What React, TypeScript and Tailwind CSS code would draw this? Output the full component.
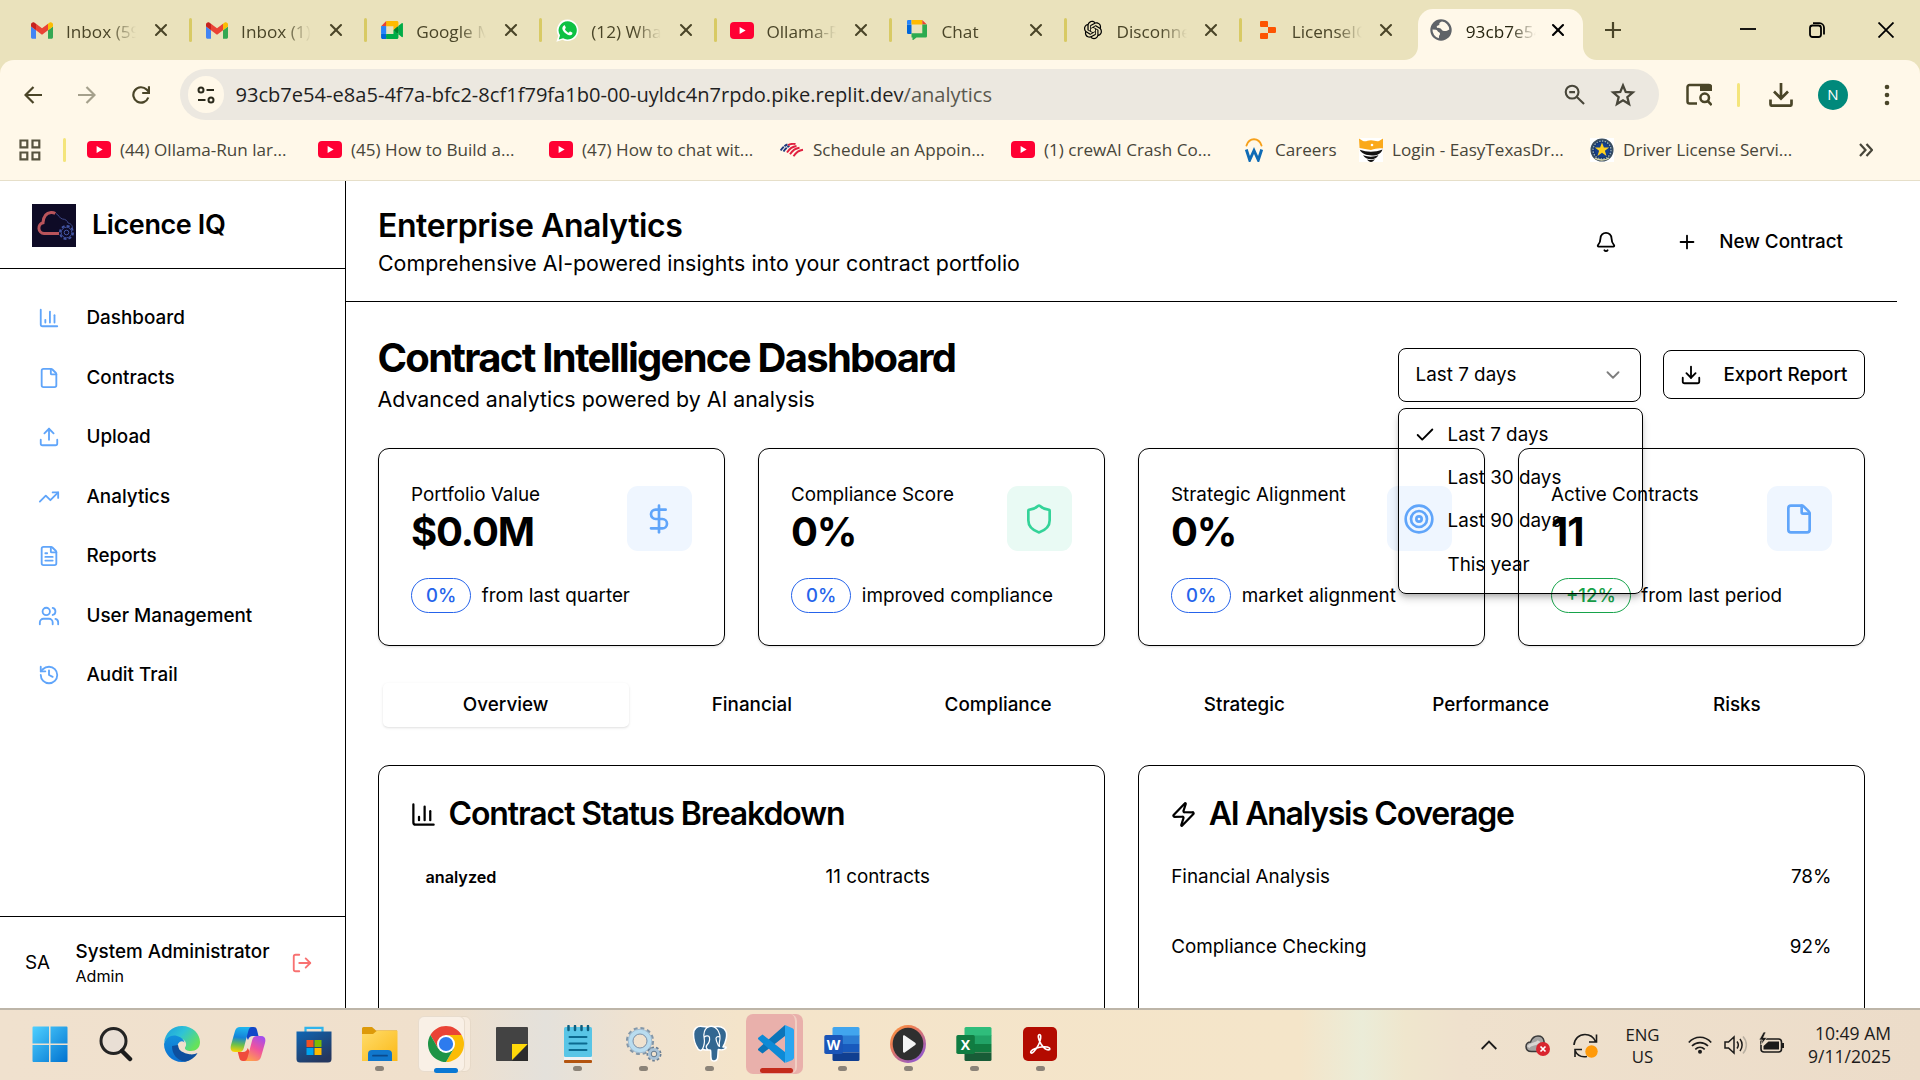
import React from "react";
import {
  X, Plus, Bell, Download, Upload, File, FileText,
  TrendingUp, Users, History, LogOut, DollarSign, Shield, Target, Zap, ChevronDown, Check,
} from "lucide-react";
import { RiOpenaiFill } from "react-icons/ri";

/* ---------- shared drawings ---------- */

function BarChart({ className }: { className?: string }) {
  return (
    <svg viewBox="0 0 24 24" className={className} fill="none" stroke="currentColor" strokeWidth="2" strokeLinecap="round" strokeLinejoin="round">
      <path d="M3 3v16a2 2 0 0 0 2 2h16" />
      <path d="M18 17V9" />
      <path d="M13 17V5" />
      <path d="M8 17v-3" />
    </svg>
  );
}

function Gmail() {
  return (
    <svg viewBox="52 42 88 66" className="h-[17px] w-[22px]">
      <path fill="#4285f4" d="M58 108h14V74L52 59v43c0 3.32 2.69 6 6 6" />
      <path fill="#34a853" d="M120 108h14c3.32 0 6-2.69 6-6V59l-20 15" />
      <path fill="#fbbc04" d="M120 48v26l20-15v-8c0-7.42-8.47-11.65-14.4-7.2" />
      <path fill="#ea4335" d="M72 74V48l24 18 24-18v26L96 92" />
      <path fill="#c5221f" d="M52 51v8l20 15V48l-5.6-4.2c-5.94-4.45-14.4-.22-14.4 7.2" />
    </svg>
  );
}

function Meet() {
  return (
    <svg viewBox="0 0 87.5 72" className="h-[18px] w-[22px]">
      <path fill="#00832d" d="M49.5 36l8.53 9.75 11.47 7.33 2-17.02-2-16.64-11.69 6.44z" />
      <path fill="#0066da" d="M0 51.5V66c0 3.315 2.685 6 6 6h14.5l3-10.96-3-9.54-9.95-3z" />
      <path fill="#e94235" d="M20.5 0L0 20.5l10.55 3 9.95-3 2.95-9.41z" />
      <path fill="#2684fc" d="M20.5 20.5H0v31h20.5z" />
      <path fill="#00ac47" d="M82.6 8.68L69.5 19.42v33.66l13.16 10.79c1.97 1.54 4.85.135 4.85-2.37V11c0-2.535-2.945-3.925-4.91-2.32zM49.5 36v15.5h-29V72h43c3.315 0 6-2.685 6-6V53.08z" />
      <path fill="#ffba00" d="M63.5 0h-43v20.5h29V36l20-16.57V6c0-3.315-2.685-6-6-6z" />
    </svg>
  );
}

function WhatsApp() {
  return (
    <svg viewBox="0 0 24 24" className="h-[23px] w-[23px]">
      <path d="M12.2.6A11.2 11.2 0 0 0 2.4 17.4L.4 23.7l6.5-2A11.2 11.2 0 1 0 12.2.6Z" fill="#fff" />
      <path d="M12.2 2.3a9.5 9.5 0 0 0-8 14.6l-1.3 4.4 4.5-1.3A9.5 9.5 0 1 0 12.2 2.3Z" fill="#0dc143" />
      <path d="M8.3 6.7c.4-.2.9-.2 1.1.3l.8 1.8c.1.4 0 .7-.9 1.8.9 1.7 2.200 2.9 4 3.700.9-.9 1.100-1.400 1.600-1.200l2 1c.4.300.3 1-.1 1.700-.6.900-2 1.400-3.200 1.100-3.500-.8-6.700-4.200-7-6.900-.1-1.400.8-2.900 1.700-3.300Z" fill="#fff" />
    </svg>
  );
}

function YouTube() {
  return (
    <svg viewBox="0 0 24 17" className="h-[17px] w-[24px]">
      <rect width="24" height="17" rx="4" fill="#ff0033" />
      <path d="M9.600 5v7l6-3.500z" fill="#fff" />
    </svg>
  );
}

function GoogleChat() {
  return (
    <svg viewBox="0 0 20 20" className="h-[20px] w-[20px]">
      <path d="M0 4.500h4.500V14H1.300A1.300 1.300 0 0 1 0 12.700z" fill="#0066da" />
      <path d="M1.300 0H4.500v4.500H0V1.300A1.300 1.300 0 0 1 1.300 0Z" fill="#2684fc" />
      <path d="M4.500 0h10.800v4.500H4.500z" fill="#ffba00" />
      <path d="M15.300 0l4.500 4.500h-4.500z" fill="#ea4335" />
      <path d="M15.300 4.500H20v11.800a1.300 1.300 0 0 1-1.300 1.300H9.500L5.500 20.600v-3H4.500v-4.300h10.800z" fill="#2cab4f" />
    </svg>
  );
}

function Replit() {
  return (
    <svg viewBox="0 0 16 18" className="h-[18px] w-[16px]">
      <path d="M0 1a1 1 0 0 1 1-1h6a1 1 0 0 1 1 1v5H1a1 1 0 0 1-1-1zM8 6h6.500A1.300 1.300 0 0 1 16 7.300v3.400A1.300 1.300 0 0 1 14.500 12H8zM0 13a1 1 0 0 1 1-1h7v5a1 1 0 0 1-1 1H1a1 1 0 0 1-1-1z" fill="#fd5402" />
    </svg>
  );
}

function Globe() {
  return (
    <svg viewBox="0 0 22 22" className="h-[22px] w-[22px]">
      <circle cx="11" cy="11" r="10.700" fill="#5f6368" />
      <path d="M12 2.500c-2 .5-3 1.500-2.700 3 .4 1.200-2.800.8-2.600 2.600.2 1.400 2 .8 3.300 1.200 1.600.5 1.500 2 3 2.400 1.400.4 3 .3 4.500-.3l1.800-1a8.500 8.500 0 0 0-7.300-7.900ZM2.500 10.500a8.500 8.500 0 0 0 6.300 8.700c.5-1.200-.3-2 .8-3.200.8-.9.5-2.200-.6-2.700-1.600-.7-1.300-2.200-3-2.600z" fill="#fff8e9" />
    </svg>
  );
}

function BankFlag() {
  return (
    <svg viewBox="0 0 24 14" className="h-[14px] w-[24px]" fill="none" strokeWidth="1.900">
      <path d="M.6 7.500C2.500 4.500 4.500 2.600 7.500 1.500M3.500 8.500c1.700-2.700 3.500-4.400 6-5.500" stroke="#1f3a7d" strokeDasharray="5 .8" />
      <path d="M8 2.200c3-1.600 5-1.800 7.500-1.200M7 9.500c2.300-3.500 5.500-6 9.500-6.500M10 11.300c2.500-3.800 5.500-6 9.500-6.500M13.500 13.200c2.500-3.800 5.500-6 9.500-6.500" stroke="#e0203f" />
    </svg>
  );
}

function Workday() {
  return (
    <svg viewBox="0 0 20 24" className="h-[24px] w-[20px]" fill="none">
      <path d="M2.500 7.500C4 3 6.500 1.300 10 1.300s6 1.700 7.500 6.200" stroke="#f6a01a" strokeWidth="1.900" strokeLinecap="round" />
      <path d="M2.300 11.500l3.400 10.500L10 12.500l4.300 9.500 3.400-10.500" stroke="#0f6bb5" strokeWidth="2.900" />
    </svg>
  );
}

function TexasShield() {
  return (
    <svg viewBox="0 0 24 24" className="h-[24px] w-[24px]">
      <rect width="24" height="24" fill="#fff" />
      <path d="M0 .5l4 2.500c3 1 4.500-.8 8-.8s5 1.500 8 .8L24 .5v10c-4-.8-7.500.2-12 1.500C8 11.500 4 10.500.5 10z" fill="#fba919" />
      <circle cx="13" cy="7" r="1.300" fill="#fff" />
      <path d="M.8 11.800c7 2.500 15 2.800 22.700-.3-1.500 4-5 6-10.500 6S2.500 15.800.8 11.800Z" fill="#111" />
      <path d="M4 17.300c5.500 2 10.500 1.900 15.500-.2-1.600 3-4 4.100-7.500 4.100s-6.300-1.300-8-3.900ZM8 21.400c3 .7 5 .7 8-.1-1.200 1.700-2.500 2.500-4 2.700-1.500-.2-3-1.200-4-2.600Z" fill="#111" />
    </svg>
  );
}

function DpsBadge() {
  return (
    <svg viewBox="0 0 24 24" className="h-[24px] w-[24px]">
      <rect width="24" height="24" fill="#fff" />
      <circle cx="12" cy="12" r="10.800" fill="#17386f" stroke="#3c4f5f" strokeWidth="1.500" />
      <circle cx="12" cy="12" r="9" fill="none" stroke="#9fb3b3" strokeWidth="1.300" strokeDasharray="1.500 1.300" />
      <circle cx="12" cy="12" r="7.300" fill="#15408f" />
      <path d="M12 4.500l1.900 5h5.200l-4.200 3.200 1.600 5.200-4.500-3.100-4.500 3.100 1.600-5.200-4.200-3.200h5.200z" fill="#ffd11f" />
      <path d="M5 20c3 2.500 10 2.800 14 0" stroke="#d9d6a8" strokeWidth="1.500" fill="none" />
    </svg>
  );
}

/* ---------- browser chrome ---------- */

const tabs = [
  { icon: <Gmail />, title: "Inbox (59)" },
  { icon: <Gmail />, title: "Inbox (1)" },
  { icon: <Meet />, title: "Google Meet" },
  { icon: <WhatsApp />, title: "(12) WhatsApp" },
  { icon: <YouTube />, title: "Ollama-Run" },
  { icon: <GoogleChat />, title: "Chat" },
  { icon: <RiOpenaiFill className="h-[22px] w-[22px] text-black" />, title: "Disconnect" },
  { icon: <Replit />, title: "LicenseIQ" },
];

function TabTitle({ children }: { children: React.ReactNode }) {
  return (
    <span className="w-[70px] shrink-0 overflow-hidden whitespace-nowrap text-[17.200px] leading-6 [mask-image:linear-gradient(to_right,black_62%,transparent_100%)]">
      {children}
    </span>
  );
}

function TabStrip() {
  return (
    <div className="flex h-[60px] shrink-0 bg-[#eae2bc] pl-[15px] text-[#4a4528]">
      {tabs.map((t, i) => (
        <div key={i} className="flex h-[60px] w-[175.100px] shrink-0 items-center pl-[15px]">
          <span className="flex w-[24px] shrink-0 items-center justify-center">{t.icon}</span>
          <span className="ml-[12px] mt-[3px] flex">
            <TabTitle>{t.title}</TabTitle>
          </span>
          <X className="ml-[14.500px] h-[20px] w-[20px] shrink-0" strokeWidth={2.500} />
          {i < 7 && <span className="-mr-[1.500px] ml-auto h-[24px] w-[3px] rounded-full bg-[#d8ca64]" />}
        </div>
      ))}
      <div className="relative ml-[2px] mt-[9px] flex h-[51px] w-[165px] shrink-0 items-center rounded-t-[15px] bg-[#fff8e9] pb-[9px] pl-[12px] text-[#26240f]">
        <svg viewBox="0 0 14 14" className="absolute -left-[14px] bottom-0 h-[14px] w-[14px]">
          <path d="M14 0v14H0C8 14 14 8 14 0Z" fill="#fff8e9" />
        </svg>
        <svg viewBox="0 0 14 14" className="absolute -right-[14px] bottom-0 h-[14px] w-[14px]">
          <path d="M0 0v14h14C6 14 0 8 0 0Z" fill="#fff8e9" />
        </svg>
        <Globe />
        <span className="ml-[14px] mt-[3px] flex">
          <TabTitle>93cb7e54</TabTitle>
        </span>
        <X className="ml-[12px] h-[20px] w-[20px] shrink-0 text-black" strokeWidth={2.500} />
      </div>
      <div className="flex h-[60px] flex-1 items-center">
        <svg viewBox="0 0 16 16" className="ml-[22px] h-[16px] w-[16px]" stroke="#4a4528" strokeWidth="2.200">
          <path d="M8 0v16M0 8h16" />
        </svg>
        <svg viewBox="0 0 16 16" className="ml-[119px] h-[16px] w-[16px]" stroke="#000" strokeWidth="1.800">
          <path d="M0 7h16" />
        </svg>
        <svg viewBox="0 0 16 16" className="ml-[53px] h-[16px] w-[16px]" fill="none" stroke="#000" strokeWidth="1.800">
          <rect x="1" y="3.500" width="11" height="11.500" rx="2.500" />
          <path d="M4 1.200h6.500A4.500 4.500 0 0 1 15 5.700v6.800" />
        </svg>
        <svg viewBox="0 0 16 16" className="ml-[53px] h-[16px] w-[16px]" stroke="#000" strokeWidth="1.800">
          <path d="M.5.5l15 15M15.500.5l-15 15" />
        </svg>
      </div>
    </div>
  );
}

function Toolbar() {
  return (
    <div className="flex h-[72px] shrink-0 items-center bg-[#eae2bc]">
      <div className="flex h-[72px] w-full items-center rounded-t-[14px] bg-[#fff8e9] pb-[3px] text-[#4a4528]">
        <svg viewBox="0 0 18 18" className="ml-[24px] h-[18px] w-[18px]" fill="none" stroke="currentColor" strokeWidth="2.200">
          <path d="M18 9H1.500M9.500 1L1.500 9l8 8" />
        </svg>
        <svg viewBox="0 0 18 18" className="ml-[36px] h-[18px] w-[18px] text-[#a5a08c]" fill="none" stroke="currentColor" strokeWidth="2.200">
          <path d="M0 9h16.500M8.500 1l8 8-8 8" />
        </svg>
        <svg viewBox="0 0 18 18" className="ml-[36px] h-[18px] w-[18px]" fill="none" stroke="currentColor" strokeWidth="2.200">
          <path d="M16.300 11.500A7.700 7.700 0 1 1 14.600 3.600L17 6" />
          <path d="M17 .2V7h-6.800" />
        </svg>
        <div className="ml-[30px] flex h-[51px] w-[1479px] shrink-0 items-center rounded-full bg-[#ece8e0] pl-[8px]">
          <span className="flex h-[37px] w-[36px] items-center justify-center rounded-full bg-[#fff8e9]">
            <svg viewBox="0 0 18 18" className="h-[18px] w-[18px]" fill="none" stroke="#2b2a1c" strokeWidth="2">
              <circle cx="4" cy="4" r="2.500" />
              <path d="M9.500 4H17" />
              <circle cx="14" cy="14" r="2.500" />
              <path d="M1 14h7.500" />
            </svg>
          </span>
          <span className="ml-[11.500px] whitespace-nowrap text-[20.090px] leading-[26px] text-[#1f1f1f]">
            93cb7e54-e8a5-4f7a-bfc2-8cf1f79fa1b0-00-uyldc4n7rpdo.pike.replit.dev<span className="text-[#5a584e]">/analytics</span>
          </span>
          <svg viewBox="0 0 22 22" className="ml-auto h-[21px] w-[21px] text-[#48463a]" fill="none" stroke="currentColor" strokeWidth="2.200">
            <circle cx="8.500" cy="8.500" r="6.700" />
            <path d="M13.500 13.500L21 21M5.500 8.500h6" />
          </svg>
          <svg viewBox="0 0 24 24" className="ml-[25px] mr-[23px] h-[26px] w-[26px] text-[#48463a]" fill="none" stroke="currentColor" strokeWidth="2.100">
            <path d="M12 3.200l2.500 6 6.500.5-5 4.200 1.600 6.400L12 16.900l-5.600 3.400L8 13.900 3 9.700l6.500-.5z" />
          </svg>
        </div>
        <svg viewBox="0 0 26 23" className="ml-[27px] h-[23px] w-[26px]" fill="none" stroke="currentColor" strokeWidth="2.500">
          <path d="M11 20.500H3.500a2 2 0 0 1-2-2V4a2 2 0 0 1 2-2H23a2 2 0 0 1 2 2v4" />
          <path d="M14 2h11v6H14z" fill="currentColor" stroke="none" />
          <circle cx="18.700" cy="14.800" r="4.300" />
          <path d="M21.700 18l4 4" />
        </svg>
        <span className="ml-[25px] h-[24px] w-[3px] rounded-full bg-[#f4e57c]" />
        <svg viewBox="0 0 24 24" className="ml-[28.500px] h-[24px] w-[24px]" fill="none" stroke="currentColor" strokeWidth="2.700">
          <path d="M12 0v14.500M5 8.500l7 7 7-7M1.500 16.500v4.700a1.500 1.500 0 0 0 1.500 1.500h18a1.500 1.500 0 0 0 1.500-1.500v-4.700" />
        </svg>
        <span className="ml-[25.500px] flex h-[30px] w-[30px] items-center justify-center rounded-full bg-[#00897b] text-[15px] text-white">N</span>
        <svg viewBox="0 0 6 22" className="ml-[36px] h-[22px] w-[6px]" fill="currentColor">
          <circle cx="3" cy="3" r="2.300" />
          <circle cx="3" cy="11" r="2.300" />
          <circle cx="3" cy="19" r="2.300" />
        </svg>
      </div>
    </div>
  );
}

const bookmarks = [
  { icon: <YouTube />, label: "(44) Ollama-Run lar..." },
  { icon: <YouTube />, label: "(45) How to Build a..." },
  { icon: <YouTube />, label: "(47) How to chat wit..." },
  { icon: <BankFlag />, label: "Schedule an Appoin..." },
  { icon: <YouTube />, label: "(1) crewAI Crash Co..." },
  { icon: <Workday />, label: "Careers", narrow: true },
  { icon: <TexasShield />, label: "Login - EasyTexasDr..." },
  { icon: <DpsBadge />, label: "Driver License Servi..." },
];

function BookmarksBar() {
  return (
    <div className="flex h-[49px] shrink-0 items-center border-b border-[#e6dfc9] bg-[#fff8e9] pb-[13px] text-[#48463a]">
      <svg viewBox="0 0 22 22" className="ml-[19px] h-[22px] w-[22px]" fill="none" stroke="#57533f" strokeWidth="2.200">
        <path d="M1.500 1.500h6.800v6.800H1.500zM13.500 1.500h6.800v6.800h-6.800zM1.500 13.500h6.800v6.800H1.500zM13.500 13.500h6.800v6.800h-6.800z" />
      </svg>
      <span className="ml-[22px] h-[24px] w-[3px] rounded-full bg-[#f4e57c]" />
      <div className="ml-[21px] flex">
        {bookmarks.map((b) => (
          <div key={b.label} className={b.narrow ? "flex w-[117px] items-center" : "flex w-[231px] items-center"}>
            <span className="flex w-[24px] shrink-0 items-center justify-center">{b.icon}</span>
            <span className="ml-[9px] whitespace-nowrap text-[17.100px] leading-6">{b.label}</span>
          </div>
        ))}
      </div>
      <svg viewBox="0 0 14 14" className="ml-[38px] h-[14px] w-[14px]" fill="none" stroke="#48463a" strokeWidth="2.200">
        <path d="M1 1l5.500 6L1 13M7.500 1L13 7l-5.500 6" />
      </svg>
    </div>
  );
}

/* ---------- application ---------- */

const nav = [
  { icon: <BarChart className="h-[22px] w-[22px]" />, label: "Dashboard" },
  { icon: <File className="h-[22px] w-[22px]" />, label: "Contracts" },
  { icon: <Upload className="h-[22px] w-[22px]" />, label: "Upload" },
  { icon: <TrendingUp className="h-[22px] w-[22px]" />, label: "Analytics" },
  { icon: <FileText className="h-[22px] w-[22px]" />, label: "Reports" },
  { icon: <Users className="h-[22px] w-[22px]" />, label: "User Management" },
  { icon: <History className="h-[22px] w-[22px]" />, label: "Audit Trail" },
];

function Logo() {
  return (
    <svg viewBox="0 0 44 43" className="h-[43px] w-[44px]" fill="none">
      <rect width="44" height="43" fill="#0e0b26" />
      <path d="M27 29.500H12a5.500 5.500 0 0 1-1-10.800C11.500 12 15 8.800 19 8.500c1.500-.1 3 .2 4.300 1" stroke="#b9545b" strokeWidth="3" />
      <path d="M24 9.500c3 1.500 3.500 5 6.500 5.500 3 0 5 2 5.500 4 3.500.5 5 3.500 4.500 6.500" stroke="#3f4a8c" strokeWidth="1" />
      <circle cx="34.500" cy="28.500" r="6.600" stroke="#4457a6" strokeWidth="1.800" strokeDasharray="3 2.180" />
      <circle cx="34.500" cy="28.500" r="5.300" stroke="#4457a6" strokeWidth=".9" />
      <circle cx="34.500" cy="28.500" r="2.300" stroke="#4457a6" strokeWidth="1" />
    </svg>
  );
}

function Sidebar() {
  return (
    <aside className="flex w-[346px] shrink-0 flex-col border-r border-black">
      <div className="flex h-[88px] shrink-0 items-center border-b border-black pl-[32px] pt-[2px]">
        <Logo />
        <span className="-mt-[1px] ml-[16px] text-[27px] font-semibold leading-9 tracking-[-0.400px]">Licence IQ</span>
      </div>
      <nav className="flex flex-1 flex-col pt-[19.500px]">
        {nav.map((n) => (
          <div key={n.label} className="flex h-[59.500px] items-center pl-[37.500px]">
            <span className="text-[#60a5fa]">{n.icon}</span>
            <span className="ml-[27px] text-[18.850px] font-medium leading-7">{n.label}</span>
          </div>
        ))}
      </nav>
      <div className="flex h-[92px] shrink-0 items-center border-t border-black pl-[25px] pt-[1px]">
        <span className="w-[50.500px] text-[18.850px] leading-7">SA</span>
        <div className="w-[215.500px]">
          <div className="text-[18.850px] font-medium leading-[26px]">System Administrator</div>
          <div className="text-[16.100px] leading-[22px]">Admin</div>
        </div>
        <LogOut className="h-[22px] w-[22px] text-[#f87171]" />
      </div>
    </aside>
  );
}

function Header() {
  return (
    <header className="flex h-[121px] shrink-0 items-center justify-between border-b border-black pl-[32px] pr-[32px]">
      <div className="pt-[1px]">
        <h1 className="text-[32px] font-semibold leading-[43px] tracking-[-0.430px]">Enterprise Analytics</h1>
        <p className="text-[21.380px] leading-[32px]">Comprehensive AI-powered insights into your contract portfolio</p>
      </div>
      <div className="flex items-center pt-[2px]">
        <Bell className="h-[22px] w-[22px]" />
        <Plus className="ml-[59px] h-[22px] w-[22px]" />
        <span className="ml-[21.500px] mr-[22px] text-[18.850px] font-medium leading-7">New Contract</span>
      </div>
    </header>
  );
}

const periods = ["Last 7 days", "Last 30 days", "Last 90 days", "This year"];

function PeriodSelect() {
  return (
    <div className="relative">
      <div className="flex h-[54px] w-[243px] items-center justify-between rounded-[8px] border border-black pl-[16.500px] pr-[16px]">
        <span className="text-[18.850px] leading-7">Last 7 days</span>
        <ChevronDown className="h-[22px] w-[22px] opacity-50" />
      </div>
      <div className="absolute left-0 top-[59.500px] z-10 flex h-[186px] w-[245px] flex-col rounded-[8px] border border-black pt-[4.500px] shadow-[0_5px_8px_-1px_rgba(0,0,0,0.22),0_3px_5px_-2px_rgba(0,0,0,0.2)]">
        {periods.map((p, i) => (
          <div key={p} className="flex h-[43.300px] items-center pl-[15px]">
            <span className="w-[33.500px]">{i === 0 && <Check className="h-[22px] w-[22px]" />}</span>
            <span className="text-[18.850px] leading-7">{p}</span>
          </div>
        ))}
      </div>
    </div>
  );
}

const stats = [
  { label: "Portfolio Value", value: "$0.0M", badge: "0%", note: "from last quarter", tone: "blue", icon: <DollarSign className="h-[32px] w-[32px]" /> },
  { label: "Compliance Score", value: "0%", badge: "0%", note: "improved compliance", tone: "green", icon: <Shield className="h-[32px] w-[32px]" /> },
  { label: "Strategic Alignment", value: "0%", badge: "0%", note: "market alignment", tone: "blue", icon: <Target className="h-[32px] w-[32px]" /> },
  { label: "Active Contracts", value: "11", badge: "+12%", note: "from last period", tone: "blue", icon: <File className="h-[32px] w-[32px]" /> },
];

function StatCards() {
  return (
    <div className="mt-[33px] grid shrink-0 grid-cols-4 gap-[32.500px]">
      {stats.map((s) => (
        <div key={s.label} className="h-[198px] rounded-[11px] border border-black px-[32.500px] pt-[32px] shadow-sm">
          <div className="flex h-[75px] items-center justify-between">
            <div>
              <div className="text-[18.850px] leading-[27px]">{s.label}</div>
              <div className="text-[40px] font-bold leading-[48px] tracking-[-1.100px]">{s.value}</div>
            </div>
            <span
              className={
                s.tone === "green"
                  ? "flex h-[65px] w-[65px] items-center justify-center rounded-[11px] bg-[#e9faf4] text-[#34d399]"
                  : "flex h-[65px] w-[65px] items-center justify-center rounded-[11px] bg-[#eff6ff] text-[#60a5fa]"
              }
            >
              {s.icon}
            </span>
          </div>
          <div className="mt-[22px] flex items-center">
            <span
              className={
                s.badge === "+12%"
                  ? "flex h-[35px] items-center rounded-full border border-[#16a34a] px-[14px] text-[18.500px] font-medium text-[#16a34a]"
                  : "flex h-[35px] items-center rounded-full border border-[#2563eb] px-[14px] text-[18.500px] font-medium text-[#2563eb]"
              }
            >
              {s.badge}
            </span>
            <span className="ml-[10.500px] whitespace-nowrap text-[18.850px] leading-7">{s.note}</span>
          </div>
        </div>
      ))}
    </div>
  );
}

const sections = ["Overview", "Financial", "Compliance", "Strategic", "Performance", "Risks"];

function Panels() {
  return (
    <div className="mt-[33px] grid shrink-0 grid-cols-2 gap-[33px]">
      <div className="h-[400px] rounded-[11px] border border-black px-[32.500px] pt-[31.500px]">
        <div className="flex h-[33px] items-center">
          <BarChart className="-ml-[1px] h-[27px] w-[27px]" />
          <h3 className="ml-[11.500px] whitespace-nowrap text-[32px] font-semibold leading-8 tracking-[-1.100px]">Contract Status Breakdown</h3>
        </div>
        <div className="mt-[33px] flex h-[28px] items-center pl-[14.500px]">
          <span className="w-[400px] text-[16.200px] font-semibold">analyzed</span>
          <span className="text-[18.850px]">11 contracts</span>
        </div>
      </div>
      <div className="h-[400px] rounded-[11px] border border-black px-[32.500px] pt-[31.500px]">
        <div className="flex h-[33px] items-center">
          <Zap className="-ml-[1px] h-[27px] w-[27px]" />
          <h3 className="ml-[11.500px] whitespace-nowrap text-[32px] font-semibold leading-8 tracking-[-1.240px]">AI Analysis Coverage</h3>
        </div>
        <div className="mt-[32px] flex flex-col gap-[42px] text-[18.850px] leading-7">
          <div className="flex justify-between">
            <span>Financial Analysis</span>
            <span>78%</span>
          </div>
          <div className="flex justify-between">
            <span>Compliance Checking</span>
            <span>92%</span>
          </div>
        </div>
      </div>
    </div>
  );
}

function Page() {
  return (
    <div className="flex min-h-0 flex-1 overflow-hidden bg-white font-['Inter',sans-serif] text-black">
      <Sidebar />
      <main className="flex w-[1551px] flex-col overflow-hidden">
        <Header />
        <div className="flex h-[706px] flex-col overflow-hidden pl-[31.500px] pr-[32px] pt-[33px]">
          <div className="flex h-[80px] shrink-0 items-center justify-between">
            <div>
              <h2 className="text-[40px] font-bold leading-[45px] tracking-[-1.720px]">Contract Intelligence Dashboard</h2>
              <p className="mt-[3px] text-[21.380px] leading-8">Advanced analytics powered by AI analysis</p>
            </div>
            <div className="flex items-center gap-[22px]">
              <PeriodSelect />
              <div className="mb-[1px] flex h-[49px] w-[202px] items-center rounded-[8px] border border-black pl-[16px]">
                <Download className="h-[22px] w-[22px]" />
                <span className="ml-[21.500px] whitespace-nowrap text-[18.850px] font-medium leading-7">Export Report</span>
              </div>
            </div>
          </div>
          <StatCards />
          <div className="mt-[32px] grid h-[54px] shrink-0 grid-cols-6 p-[5px]">
            {sections.map((s, i) => (
              <span
                key={s}
                className={
                  i === 0
                    ? "flex items-center justify-center rounded-[5px] pt-[1px] text-[18.850px] font-medium shadow-sm"
                    : "flex items-center justify-center pt-[1px] text-[18.850px] font-medium"
                }
              >
                {s}
              </span>
            ))}
          </div>
          <Panels />
        </div>
      </main>
    </div>
  );
}

/* ---------- taskbar ---------- */

function Windows() {
  return (
    <svg viewBox="0 0 36 36" className="h-[36px] w-[36px]">
      <defs>
        <linearGradient id="win" x1="0" y1="0" x2="1" y2="1" gradientUnits="objectBoundingBox">
          <stop offset="0" stopColor="#4fd0ff" />
          <stop offset="1" stopColor="#0072d0" />
        </linearGradient>
      </defs>
      <path d="M1.500.5H17v17H.5v-16a1 1 0 0 1 1-1ZM18.500.5h16a1 1 0 0 1 1 1v16h-17zM.5 19H17v17H1.500a1 1 0 0 1-1-1zM18.500 19h17v16a1 1 0 0 1-1 1h-16z" fill="url(#win)" />
    </svg>
  );
}

function SearchGlyph() {
  return (
    <svg viewBox="0 0 34 36" className="h-[36px] w-[34px]">
      <circle cx="14.500" cy="15" r="12.500" fill="#e9dfd5" stroke="#242424" strokeWidth="3" />
      <path d="M23 25l8 8" stroke="#1c1c1c" strokeWidth="4.500" strokeLinecap="round" />
    </svg>
  );
}

function Edge() {
  return (
    <svg viewBox="0 0 36 36" className="h-[36px] w-[36px]">
      <defs>
        <linearGradient id="edgeA" x1="0" y1="0" x2="1" y2=".6">
          <stop offset="0" stopColor="#1a9be0" />
          <stop offset=".5" stopColor="#2fc3d6" />
          <stop offset="1" stopColor="#66e25a" />
        </linearGradient>
        <linearGradient id="edgeB" x1="0" y1="0" x2="0" y2="1">
          <stop offset="0" stopColor="#1390dc" />
          <stop offset="1" stopColor="#0b6fd0" />
        </linearGradient>
      </defs>
      <path d="M0 17C1 7 8 0 18 0c11 0 18 8 18 16 0 6-4 9-9 9-4 0-6.500-1.500-6-3.500 2-2 1.500-7-3-8.500C11 10 3 11 0 17Z" fill="url(#edgeA)" />
      <path d="M0 18C2 11 8 8.500 13 10c4 1 7 3.500 7.500 6.500-3-3-8 0-7 6.500 1 7 7 10.500 14 9.500C24 35 21 36 18 36 8 36 0 28 0 18Z" fill="url(#edgeB)" />
      <path d="M13.500 20c-1.500 7 3.500 12 10.500 12 5 0 8-2.500 9.500-5-2 1.200-5 1.700-8 1.300-6-1-11-4-12-8.300ZM8 20c0 8 5 14.500 13 15.700C26 35 31 31.500 33.500 27c-6 4-18 3-19.500-8z" fill="#0d4f9e" />
    </svg>
  );
}

function Copilot() {
  return (
    <svg viewBox="0 0 36 36" className="h-[36px] w-[36px]">
      <defs>
        <linearGradient id="cpA" x1=".3" y1="0" x2=".2" y2="1">
          <stop offset="0" stopColor="#1fb4ee" />
          <stop offset=".4" stopColor="#1483d8" />
          <stop offset=".7" stopColor="#6cc04a" />
          <stop offset="1" stopColor="#ffd400" />
        </linearGradient>
        <linearGradient id="cpB" x1=".8" y1="0" x2=".3" y2="1">
          <stop offset="0" stopColor="#a24df0" />
          <stop offset=".5" stopColor="#f0549c" />
          <stop offset="1" stopColor="#ffa04d" />
        </linearGradient>
      </defs>
      <path d="M17 1h6.500c2 0 3 1 3.500 3l1.500 6H23c-3 0-4 1.500-5 4l-3-6z" fill="#1147c8" />
      <path d="M10 1h12c-2 0-3 1.500-3.700 4l-4.500 17c-.7 2.600-2 4-4.500 4H5C1 26 0 23 1 19L5 5c.8-2.800 2.500-4 5-4Z" fill="url(#cpA)" />
      <path d="M19 35h-6c-2 0-3.200-1-3.700-3l-1.500-6h5c3 0 4-1.500 5-4l3 6z" fill="#f04b3c" />
      <path d="M26 35H14c2 0 3-1.500 3.700-4l4.500-17c.7-2.600 2-4 4.500-4H31c4 0 5 3 4 7l-4 14c-.8 2.800-2.500 4-5 4Z" fill="url(#cpB)" />
    </svg>
  );
}

function Store() {
  return (
    <svg viewBox="0 0 36 37" className="h-[37px] w-[36px]">
      <defs>
        <linearGradient id="store" x1="0" y1="0" x2=".6" y2="1">
          <stop offset="0" stopColor="#0f66b4" />
          <stop offset="1" stopColor="#25375f" />
        </linearGradient>
      </defs>
      <path d="M9.500 7V1.800h17V7" fill="none" stroke="#2fb4ec" strokeWidth="2.200" />
      <path d="M.5 5.500h35V33a3.500 3.500 0 0 1-3.500 3.500H4A3.500 3.500 0 0 1 .5 33z" fill="url(#store)" />
      <path d="M10.500 14h7v7h-7z" fill="#f25022" />
      <path d="M18.500 14h7v7h-7z" fill="#7fba00" />
      <path d="M10.500 22h7v7h-7z" fill="#00a4ef" />
      <path d="M18.500 22h7v7h-7z" fill="#ffb900" />
    </svg>
  );
}

function Explorer() {
  return (
    <svg viewBox="0 0 36 36" className="h-[36px] w-[36px]">
      <defs>
        <linearGradient id="folder" x1="0" y1="0" x2="1" y2="1">
          <stop offset="0" stopColor="#ffdc6b" />
          <stop offset="1" stopColor="#fbb917" />
        </linearGradient>
      </defs>
      <path d="M0 2.500A1.500 1.500 0 0 1 1.500 1H10l4 3.500h21V12H0z" fill="#dd9a0a" />
      <path d="M0 8h11l4-3.300h20.500V35H0z" fill="url(#folder)" />
      <path d="M6 28a4 4 0 0 1 4-4h16a4 4 0 0 1 4 4v7H6z" fill="#1077cc" />
      <path d="M11 29.700h14" stroke="#0a4a8c" strokeWidth="1.800" strokeLinecap="round" />
    </svg>
  );
}

function Chrome() {
  return (
    <svg viewBox="2 2 44 44" className="h-[36px] w-[36px]">
      <path d="M4.950 13A22 22 0 0 1 43.050 13H24l-9.530 16.500z" fill="#ea4335" />
      <path d="M43.050 13A22 22 0 0 1 24 46l9.530-16.500L24 13z" fill="#fbbc05" />
      <path d="M24 46A22 22 0 0 1 4.950 13l9.520 16.500h19.060z" fill="#1e9446" />
      <circle cx="24" cy="24" r="11" fill="#fff" />
      <circle cx="24" cy="24" r="8.700" fill="#2d7bee" />
    </svg>
  );
}

function StickyNotes() {
  return (
    <svg viewBox="0 0 32 34" className="h-[34px] w-[32px]">
      <rect width="32" height="34" rx="1" fill="#434343" />
      <path d="M16 17h16L16 33z" fill="#ffd90a" />
      <path d="M32 17v17H16z" fill="#2c2c2c" />
    </svg>
  );
}

function Notepad() {
  return (
    <svg viewBox="0 0 28 38" className="h-[38px] w-[28px]">
      <rect y="35" width="28" height="3" rx="1" fill="#b3540f" />
      <rect y="31" width="28" height="4" fill="#eef1f3" />
      <rect y="2" width="28" height="30" rx="1.500" fill="#58c5e6" />
      <path d="M4.500 1v4M11 1v4M17.500 1v4M24 1v4" stroke="#0c5f80" strokeWidth="2.500" strokeLinecap="round" />
      <path d="M5.500 12h17M5.500 18.500h17M5.500 25h17" stroke="#0b6a90" strokeWidth="2" strokeLinecap="round" />
    </svg>
  );
}

function Gears() {
  return (
    <svg viewBox="0 0 36 36" className="h-[36px] w-[36px]" fill="none">
      <circle cx="14" cy="15" r="12.600" stroke="#8497a8" strokeWidth="3" strokeDasharray="3.800 2.800" />
      <circle cx="14" cy="15" r="9.500" stroke="#b9dcef" strokeWidth="5" />
      <circle cx="14" cy="15" r="11.800" stroke="#9db4c8" strokeWidth=".8" />
      <circle cx="14" cy="15" r="7" stroke="#7b90a8" strokeWidth="1" />
      <circle cx="28" cy="28" r="6.400" stroke="#6b7f94" strokeWidth="2.200" strokeDasharray="2.600 1.870" />
      <circle cx="28" cy="28" r="4.500" stroke="#a9c3d8" strokeWidth="3" />
      <circle cx="28" cy="28" r="2.800" stroke="#5f7890" strokeWidth="1" />
    </svg>
  );
}

function Postgres() {
  return (
    <svg viewBox="0 0 36 38" className="h-[38px] w-[36px]" strokeLinejoin="round" strokeLinecap="round">
      <path
        d="M10.500 1.500C5.500.5 1.500 3.500 1.500 9c0 4.500 2 11.500 4.500 15 1.500 2 3.200 1.800 4.500.2 1.500.8 3 1 4.500.6.8.2 3 0 3.500.3.7 3-.2 6.500.8 9.400.8 2.300 5.500 2 6.200-1 .6-2.800.3-6 .8-9 2.500.7 6.200.2 7.700-1.500.8-1-1-1.200-3-1C34 17 35.500 10 34 6.500 32 2 27 .5 22.500 2c-2.500-1-5-.8-7 .3-1.500-.5-3.500-.8-5-.8Z"
        fill="#336791" stroke="#fff" strokeWidth="1.500"
      />
      <path d="M15.500 2.300c-3.500 2.500-4 7-3.300 11 .8 4-.2 7.500-1.700 10.900M22.500 2c3.500 2.500 5.500 6.500 5.500 11 0 3-1.500 5-.5 8.500M12.500 12c1.500-1.500 4.500-1.500 5 .5.5 3-1 6-2.500 7.500-1.300 1.600-1 3 .5 4.500M28 12c-2-.8-3.800-.3-4 1.500 0 2.500 1.500 5 2.500 7.500" fill="none" stroke="#fff" strokeWidth="1.200" />
    </svg>
  );
}

function VsCode() {
  return (
    <svg viewBox="0 0 36 38" className="h-[38px] w-[36px]">
      <path d="M27 0v11L4.500 28.500 0.500 25.500c-.7-.6-.7-1.500 0-2.100z" fill="#0b74b8" />
      <path d="M4.500 9.500L27 27v11L.5 14.600c-.7-.6-.7-1.500 0-2.100z" fill="#0d8ad6" />
      <path d="M27 0l7.500 3.300c1 .5 1.500 1.200 1.500 2.300v27c0 1-.5 1.800-1.500 2.300L27 38c1.200-.5 0-1.500 0-3z" fill="#2aa6f0" />
    </svg>
  );
}

function Office({ letter, shades, tile }: { letter: string; shades: string[]; tile: string }) {
  return (
    <svg viewBox="0 0 36 36" className="h-[36px] w-[36px]">
      <path d="M8.500 2.500A1.500 1.500 0 0 1 10 1h24a1.500 1.500 0 0 1 1.500 1.500V10h-27z" fill={shades[0]} />
      <path d="M8.500 9.500h27V18h-27z" fill={shades[1]} />
      <path d="M8.500 18h27v8.500h-27z" fill={shades[2]} />
      <path d="M8.500 26.500h27v7a1.500 1.500 0 0 1-1.500 1.500H10a1.500 1.500 0 0 1-1.500-1.500z" fill={shades[3]} />
      <rect x=".3" y="9" width="18.500" height="19" rx="1.700" fill={tile} />
      <text x="9.500" y="23.500" textAnchor="middle" fontFamily="Open Sans, sans-serif" fontWeight="700" fontSize="14" fill="#fff">{letter}</text>
    </svg>
  );
}

function MediaPlayer() {
  return (
    <svg viewBox="0 0 36 38" className="h-[38px] w-[36px]">
      <defs>
        <linearGradient id="media" x1="0" y1="0" x2=".8" y2="1">
          <stop offset="0" stopColor="#ff9a3d" />
          <stop offset=".4" stopColor="#e8785a" />
          <stop offset="1" stopColor="#8a55d8" />
        </linearGradient>
      </defs>
      <ellipse cx="18" cy="19" rx="18" ry="19" fill="url(#media)" />
      <ellipse cx="18" cy="19" rx="15.300" ry="16.300" fill="#2f2f2f" />
      <path d="M13 11.500c0-1 .8-1.500 1.700-1l10.500 7.300c.8.6.8 1.700 0 2.300l-10.500 7.400c-.9.500-1.700 0-1.700-1z" fill="#f4f4f4" />
    </svg>
  );
}

function Acrobat() {
  return (
    <svg viewBox="0 0 34 34" className="h-[34px] w-[34px]">
      <rect width="34" height="34" rx="5" fill="#b30b00" />
      <path d="M16.500 7.500c-2.300 0-1 5.500 1.500 9.500 2.500 3.800 6 6.300 8 5.800 2-.6.500-3.300-5.500-3-5 .2-11 2.200-12.500 4.500-1 1.800.6 2.800 2.700.5 2.800-3.200 6.300-9.500 6.900-13.500.3-2.300 0-3.800-1.100-3.800Z" fill="none" stroke="#fff" strokeWidth="1.600" />
    </svg>
  );
}

function Dot() {
  return <span className="absolute bottom-[7px] h-[5px] w-[9px] rounded-full bg-[#8b8378]" />;
}

const apps: { icon: React.ReactNode; kind?: "dot" | "chrome" | "code" }[] = [
  { icon: <Windows /> },
  { icon: <SearchGlyph /> },
  { icon: <Edge /> },
  { icon: <Copilot /> },
  { icon: <Store /> },
  { icon: <Explorer />, kind: "dot" },
  { icon: <Chrome />, kind: "chrome" },
  { icon: <StickyNotes /> },
  { icon: <Notepad />, kind: "dot" },
  { icon: <Gears />, kind: "dot" },
  { icon: <Postgres />, kind: "dot" },
  { icon: <VsCode />, kind: "code" },
  { icon: <Office letter="W" shades={["#41a5ee", "#2b7cd3", "#185abd", "#103f91"]} tile="#1a55b8" />, kind: "dot" },
  { icon: <MediaPlayer />, kind: "dot" },
  { icon: <Office letter="X" shades={["#2fbd7b", "#21a366", "#107c41", "#185c37"]} tile="#107c41" />, kind: "dot" },
  { icon: <Acrobat />, kind: "dot" },
];

function Tray() {
  return (
    <div className="flex h-full flex-1 items-center text-[#1c1b1a]">
      <svg viewBox="0 0 16 10" className="ml-auto h-[10px] w-[16px]" fill="none" stroke="currentColor" strokeWidth="1.800">
        <path d="M.7 9L8 1.500 15.300 9" />
      </svg>
      <svg viewBox="0 0 25 22" className="ml-[28px] h-[22px] w-[25px]">
        <path d="M6.500 17.500C3 17.500 1 15.500 1 12.500S3.500 8 5.500 8C7 4 9.500 2 13 2c3 0 5.500 2 6 5v10.500z" fill="#a6a4a2" stroke="#3a3a3a" strokeWidth="1.500" />
        <path d="M3 13c3-4 9-2 11-6" stroke="#d9d6d2" strokeWidth="3" fill="none" />
        <circle cx="18" cy="15" r="7" fill="#d9252f" />
        <path d="M15.500 12.500l5 5M20.500 12.500l-5 5" stroke="#fff" strokeWidth="1.700" />
      </svg>
      <svg viewBox="0 0 25 25" className="ml-[23px] h-[25px] w-[25px]" fill="none" stroke="currentColor" strokeWidth="1.600">
        <path d="M1 12C1.500 5.500 6 1.500 12 1.500c5 0 8.500 2.500 10.500 7M23.500 1.500v7.500h-7.500M14 23.500C8.500 24.500 4 22 2 17.500M2 24v-7.500h7" />
        <circle cx="18.500" cy="18.500" r="6.200" fill="#ff9a0a" stroke="none" />
      </svg>
      <div className="ml-[27px] mt-[2px] w-[36px] text-center text-[16.800px] leading-[22.500px]">
        <div>ENG</div>
        <div>US</div>
      </div>
      <svg viewBox="0 0 24 18" className="ml-[27px] h-[18px] w-[24px]" fill="none" stroke="currentColor" strokeWidth="1.700">
        <path d="M.8 6.500C7-.5 17-.5 23.200 6.500M4 10c4.500-4.500 11.500-4.500 16 0M7.300 13.300c2.800-2.600 6.600-2.600 9.400 0" />
        <circle cx="12" cy="15.800" r="2" fill="currentColor" stroke="none" />
      </svg>
      <svg viewBox="0 0 24 20" className="ml-[12px] h-[20px] w-[24px]" fill="none" stroke="currentColor" strokeWidth="1.500">
        <path d="M1 7h3.500L10 2v16l-5.500-5H1zM13 6.500c1.500 2 1.500 5 0 7M16 4c2.800 3.500 2.800 8.500 0 12" />
        <path d="M19 1.500c4.500 5 4.500 12 0 17" stroke="#b9b0a2" />
      </svg>
      <svg viewBox="0 0 26 22" className="ml-[11px] mt-[-5px] h-[22px] w-[26px]">
        <rect x="2" y="7" width="20.500" height="13" rx="3" fill="none" stroke="currentColor" strokeWidth="1.600" />
        <path d="M4.500 17.500V14l5-4.500H20v8z" fill="currentColor" />
        <path d="M23 11h2v5h-2z" fill="currentColor" />
        <path d="M4.500 0L0 8h3.300L2 13l6-7.500H4.500L7 0z" fill="currentColor" stroke="#eedfcc" strokeWidth=".7" />
      </svg>
      <div className="ml-[21.500px] mr-[29px] w-[85px] whitespace-nowrap text-right text-[17.550px] leading-[23.500px]">
        <div>10:49 AM</div>
        <div>9/11/2025</div>
      </div>
    </div>
  );
}

function Taskbar() {
  return (
    <div className="flex h-[72px] shrink-0 border-t-2 border-[#bdb5a8] bg-[linear-gradient(90deg,#f0e1ce_0px,#f0e0cc_440px,#e4e1db_545px,#f0e2cf_640px,#f4e4ca_740px,#f4e5c9_1300px,#ebecd8_1362px,#efe6cd_1405px,#efe1cd_1460px,#ecdcc9_1920px)] pl-[16.500px]">
      {apps.map((a, i) => (
        <div key={i} className="relative flex h-[68px] w-[66.050px] shrink-0 items-center justify-center">
          {a.kind === "chrome" && (
            <>
              <span className="absolute left-[12px] top-[6px] h-[56px] w-[46px] rounded-[6px] border border-[#e6d9c8] bg-[#f7ecdf]" />
              <span className="absolute left-[5px] top-[6px] h-[56px] w-[47px] rounded-[6px] border border-[#e8dccd] bg-[#f9f0e6]" />
            </>
          )}
          {a.kind === "code" && (
            <>
              <span className="absolute left-[12px] top-[4px] h-[60px] w-[48px] rounded-[7px] bg-[#e9b0ab]" />
              <span className="absolute left-[3px] top-[4px] h-[60px] w-[51px] rounded-[7px] border-r-2 border-[#f1cfc3] bg-[#e9b0ab]" />
            </>
          )}
          <span className="relative flex">{a.icon}</span>
          {a.kind === "dot" && <Dot />}
          {a.kind === "chrome" && <span className="absolute bottom-[5px] h-[5px] w-[24px] rounded-full bg-[#0a78d4]" />}
          {a.kind === "code" && <span className="absolute bottom-[5px] h-[5px] w-[33px] rounded-full bg-[#c42b1c]" />}
        </div>
      ))}
      <Tray />
    </div>
  );
}

export default function App() {
  return (
    <div className="flex h-[1080px] w-[1920px] flex-col overflow-hidden bg-white font-['Open_Sans',sans-serif]">
      <TabStrip />
      <Toolbar />
      <BookmarksBar />
      <Page />
      <Taskbar />
    </div>
  );
}
